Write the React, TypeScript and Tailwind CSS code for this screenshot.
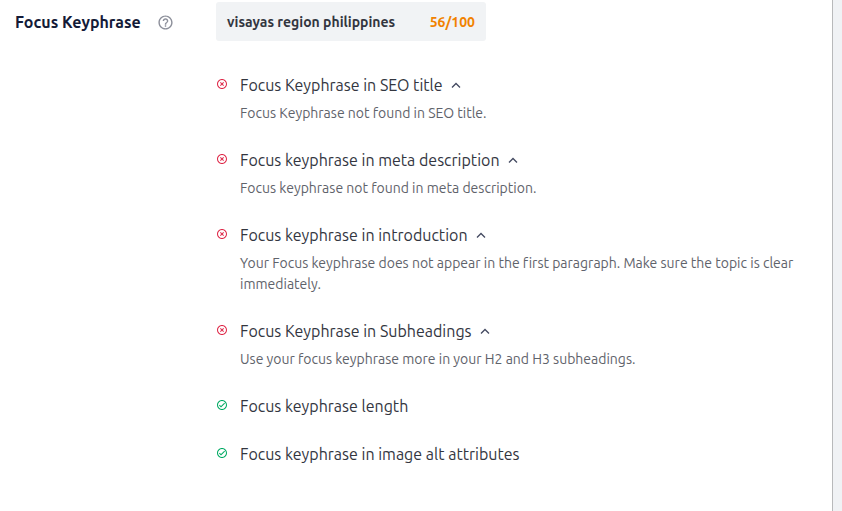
import { useState } from "react";

type Check = {
  title: string;
  passed: boolean;
  description?: string;
};

const checks: Check[] = [
  {
    title: "Focus Keyphrase in SEO title",
    passed: false,
    description: "Focus Keyphrase not found in SEO title.",
  },
  {
    title: "Focus keyphrase in meta description",
    passed: false,
    description: "Focus keyphrase not found in meta description.",
  },
  {
    title: "Focus keyphrase in introduction",
    passed: false,
    description:
      "Your Focus keyphrase does not appear in the first paragraph. Make sure the topic is clear immediately.",
  },
  {
    title: "Focus Keyphrase in Subheadings",
    passed: false,
    description: "Use your focus keyphrase more in your H2 and H3 subheadings.",
  },
  { title: "Focus keyphrase length", passed: true },
  { title: "Focus keyphrase in image alt attributes", passed: true },
];

function HelpIcon() {
  return (
    <svg viewBox="0 0 24 24" className="size-[17px]" fill="#8c8f9a" aria-hidden="true">
      <path d="M11 18h2v-2h-2v2zm1-16C6.48 2 2 6.48 2 12s4.48 10 10 10 10-4.48 10-10S17.52 2 12 2zm0 18c-4.41 0-8-3.59-8-8s3.59-8 8-8 8 3.59 8 8-3.59 8-8 8zm0-14c-2.21 0-4 1.79-4 4h2c0-1.1.9-2 2-2s2 .9 2 2c0 2-3 1.75-3 5h2c0-2.25 3-2.5 3-5 0-2.21-1.79-4-4-4z" />
    </svg>
  );
}

function StatusIcon({ passed }: { passed: boolean }) {
  if (passed) {
    return (
      <svg viewBox="0 0 24 24" className="size-3 shrink-0" fill="#00aa63" aria-hidden="true">
        <path d="M12 2C6.5 2 2 6.5 2 12s4.5 10 10 10 10-4.5 10-10S17.5 2 12 2zm0 18c-4.4 0-8-3.6-8-8s3.6-8 8-8 8 3.6 8 8-3.6 8-8 8zm4.6-12.4L10 14.2l-2.6-2.6L6 13l4 4 8-8-1.4-1.4z" />
      </svg>
    );
  }

  return (
    <svg viewBox="0 0 24 24" className="size-3 shrink-0" fill="#df2a4a" aria-hidden="true">
      <path d="M14.6 8L12 10.6 9.4 8 8 9.4l2.6 2.6L8 14.6 9.4 16l2.6-2.6 2.6 2.6 1.4-1.4-2.6-2.6L16 9.4 14.6 8zM12 2C6.5 2 2 6.5 2 12s4.5 10 10 10 10-4.5 10-10S17.5 2 12 2zm0 18c-4.4 0-8-3.6-8-8s3.6-8 8-8 8 3.6 8 8-3.6 8-8 8z" />
    </svg>
  );
}

function CheckItem({ title, passed, description }: Check) {
  const [open, setOpen] = useState(true);

  return (
    <li className="flex gap-3">
      <div className="flex h-[22px] items-center">
        <StatusIcon passed={passed} />
      </div>
      <div className="min-w-0">
        {description ? (
          <button
            type="button"
            aria-expanded={open}
            onClick={() => setOpen(!open)}
            className="flex items-center gap-2 text-left text-base leading-6"
          >
            {title}
            <svg
              viewBox="0 0 10 6"
              className={open ? "h-1.5 w-2.5" : "h-1.5 w-2.5 rotate-180"}
              fill="none"
              stroke="#434960"
              strokeWidth="1.3"
              aria-hidden="true"
            >
              <path d="M1 5.5L5 1.5 9 5.5" />
            </svg>
          </button>
        ) : (
          <p className="text-base leading-6">{title}</p>
        )}
        {description && open ? (
          <p className="mt-1.5 text-sm leading-[21px] text-[#5f636b]">
            {description}
          </p>
        ) : null}
      </div>
    </li>
  );
}

export default function App() {
  return (
    <div className="flex min-h-screen bg-[#f0f2f5] font-['Ubuntu','Noto_Sans',sans-serif] text-[#33363f] [font-variant-ligatures:none]">
      <main className="mr-[9px] flex flex-1 border-r border-[#b8b9bb] bg-white pt-0.5 pr-6 pl-[15px]">
        <div className="flex h-10 w-[201px] shrink-0 items-center gap-4">
          <h2 className="text-base font-bold text-[#141b38]">
            Focus Keyphrase
          </h2>
          <button type="button" aria-label="Help">
            <HelpIcon />
          </button>
        </div>
        <div className="min-w-0 flex-1">
          <button
            type="button"
            className="flex h-[39px] w-[270px] items-center justify-between rounded-[3px] bg-[#f1f3f5] px-[11px] text-sm font-bold"
          >
            <span>visayas region philippines</span>
            <span className="text-[#f18200]">56/100</span>
          </button>
          <ul className="mt-8 flex flex-col gap-6">
            {checks.map((check) => (
              <CheckItem key={check.title} {...check} />
            ))}
          </ul>
        </div>
      </main>
    </div>
  );
}
